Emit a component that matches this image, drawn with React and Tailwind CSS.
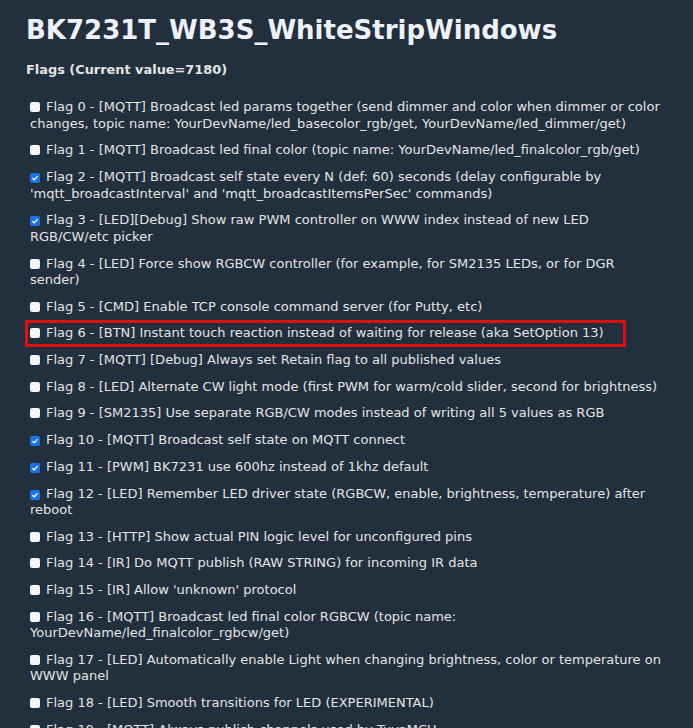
import React from "react";

const flags = [
  [["Flag 0 - [MQTT] Broadcast led params together (send dimmer and color when dimmer or color", "changes, topic name: YourDevName/led_basecolor_rgb/get, YourDevName/led_dimmer/get)"], false],
  [["Flag 1 - [MQTT] Broadcast led final color (topic name: YourDevName/led_finalcolor_rgb/get)"], false],
  [["Flag 2 - [MQTT] Broadcast self state every N (def: 60) seconds (delay configurable by", "'mqtt_broadcastInterval' and 'mqtt_broadcastItemsPerSec' commands)"], true],
  [["Flag 3 - [LED][Debug] Show raw PWM controller on WWW index instead of new LED", "RGB/CW/etc picker"], true],
  [["Flag 4 - [LED] Force show RGBCW controller (for example, for SM2135 LEDs, or for DGR", "sender)"], false],
  [["Flag 5 - [CMD] Enable TCP console command server (for Putty, etc)"], false],
  [["Flag 6 - [BTN] Instant touch reaction instead of waiting for release (aka SetOption 13)"], false],
  [["Flag 7 - [MQTT] [Debug] Always set Retain flag to all published values"], false],
  [["Flag 8 - [LED] Alternate CW light mode (first PWM for warm/cold slider, second for brightness)"], false],
  [["Flag 9 - [SM2135] Use separate RGB/CW modes instead of writing all 5 values as RGB"], false],
  [["Flag 10 - [MQTT] Broadcast self state on MQTT connect"], true],
  [["Flag 11 - [PWM] BK7231 use 600hz instead of 1khz default"], true],
  [["Flag 12 - [LED] Remember LED driver state (RGBCW, enable, brightness, temperature) after", "reboot"], true],
  [["Flag 13 - [HTTP] Show actual PIN logic level for unconfigured pins"], false],
  [["Flag 14 - [IR] Do MQTT publish (RAW STRING) for incoming IR data"], false],
  [["Flag 15 - [IR] Allow 'unknown' protocol"], false],
  [["Flag 16 - [MQTT] Broadcast led final color RGBCW (topic name:", "YourDevName/led_finalcolor_rgbcw/get)"], false],
  [["Flag 17 - [LED] Automatically enable Light when changing brightness, color or temperature on", "WWW panel"], false],
  [["Flag 18 - [LED] Smooth transitions for LED (EXPERIMENTAL)"], false],
  [["Flag 19 - [MQTT] Always publish channels used by TuyaMCU"], false],
  [["Flag 20 - [LED] Force RGB mode (3 PWMs for LEDs) and ignore further PWMs"], false],
];

function Box({ checked }) {
  if (checked) {
    return (
      <span className="inline-flex items-center justify-center w-[10px] h-[10px] rounded-[2px] bg-[#1a73e8] align-[-1px] mr-[6px]">
        <svg viewBox="0 0 10 10" className="w-[8px] h-[8px]">
          <path d="M1.8 5.2 L4 7.3 L8.2 2.6" fill="none" stroke="#ffffff" strokeWidth="1.7" />
        </svg>
      </span>
    );
  }
  return <span className="inline-block w-[10px] h-[10px] rounded-[2px] bg-[#f5f5f5] align-[-1px] mr-[6px]" />;
}

export default function App() {
  return (
    <div className="h-[728px] bg-[#222f3d] text-[#e4e4e4] pl-[26px] pr-[4px] pt-[12px] overflow-hidden" style={{ fontFamily: '"DejaVu Sans", Verdana, sans-serif' }}>
      <h1 className="text-[26px] leading-[36px] font-bold text-[#eef2f6] whitespace-nowrap">BK7231T_WB3S_WhiteStripWindows</h1>
      <div className="mt-[14px] text-[12.9px] leading-[16.5px] font-bold">Flags (Current value=7180)</div>
      <div className="mt-[20.8px] text-[13px] leading-[16.5px]">
        {flags.map(([lines, c], i) => (
          <div key={i} className="relative ml-[4px] mb-[10.2px] whitespace-nowrap">
            <label>
              <Box checked={c} />
              {lines.map((l, j) => (
                <React.Fragment key={j}>
                  {j > 0 && <br />}
                  {l}
                </React.Fragment>
              ))}
            </label>
            {i === 6 && (
              <div className="absolute left-[-5px] top-[-5px] w-[601px] h-[27px] border-[3px] border-[#e01010]" />
            )}
          </div>
        ))}
      </div>
    </div>
  );
}
